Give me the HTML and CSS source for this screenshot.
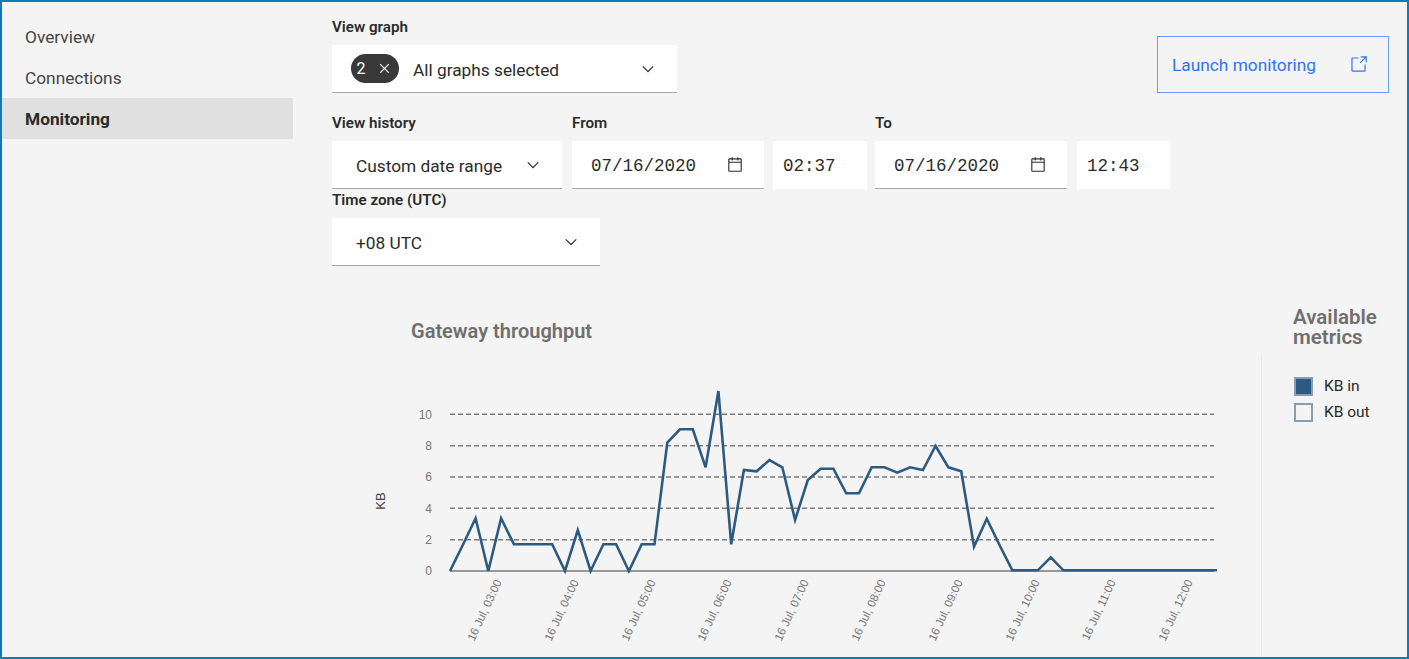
FILE: index.html
```html
<!DOCTYPE html>
<html>
  <head>
    <meta charset="utf-8">
    <title>Monitoring</title>
    <link rel="stylesheet" href="styles.css">
  </head>
  <body>
    <div class="cadre">
      <nav class="menu">
        <a class="menu-item">Overview</a>
        <a class="menu-item">Connections</a>
        <a class="menu-item actif">Monitoring</a>
      </nav>

      <main class="contenu">
        <div class="ligne-graph">
          <div class="champ">
            <div class="label">View graph</div>
            <div class="select select-graph">
              <span class="tag">2
                <svg class="icone-tag" viewBox="0 0 16 16"><path d="M12 4.7L11.3 4 8 7.3 4.7 4 4 4.7 7.3 8 4 11.3l.7.7L8 8.7l3.3 3.3.7-.7L8.7 8z"/></svg>
              </span>
              <span class="select-texte">All graphs selected</span>
              <svg class="icone" viewBox="0 0 16 16"><path d="M8 11L3 6l.7-.7L8 9.6l4.3-4.3.7.7z"/></svg>
            </div>
          </div>
          <a class="lancer">
            Launch monitoring
            <svg class="icone-lancer" viewBox="0 0 16 16"><path d="M13 14H3c-.6 0-1-.4-1-1V3c0-.6.4-1 1-1h5v1H3v10h10V8h1v5c0 .6-.4 1-1 1z"/><path d="M10 1v1h3.3L9 6.3l.7.7L14 2.7V6h1V1z"/></svg>
          </a>
        </div>

        <div class="ligne-dates">
          <div class="champ historique">
            <div class="label">View history</div>
            <div class="select">
              <span class="select-texte">Custom date range</span>
              <svg class="icone" viewBox="0 0 16 16"><path d="M8 11L3 6l.7-.7L8 9.6l4.3-4.3.7.7z"/></svg>
            </div>
          </div>
          <div class="champ date">
            <div class="label">From</div>
            <div class="select saisie">
              <span class="mono">07/16/2020</span>
              <svg class="icone" viewBox="0 0 16 16"><path d="M13 2h-2V1h-1v1H6V1H5v1H3a1 1 0 0 0-1 1v10a1 1 0 0 0 1 1h10a1 1 0 0 0 1-1V3a1 1 0 0 0-1-1zm0 11H3V6h10zm0-8H3V3h2v1h1V3h4v1h1V3h2z"/></svg>
            </div>
          </div>
          <div class="champ heure">
            <div class="label">&nbsp;</div>
            <div class="select heure-boite"><span class="mono">02:37</span></div>
          </div>
          <div class="champ date">
            <div class="label">To</div>
            <div class="select saisie">
              <span class="mono">07/16/2020</span>
              <svg class="icone" viewBox="0 0 16 16"><path d="M13 2h-2V1h-1v1H6V1H5v1H3a1 1 0 0 0-1 1v10a1 1 0 0 0 1 1h10a1 1 0 0 0 1-1V3a1 1 0 0 0-1-1zm0 11H3V6h10zm0-8H3V3h2v1h1V3h4v1h1V3h2z"/></svg>
            </div>
          </div>
          <div class="champ heure">
            <div class="label">&nbsp;</div>
            <div class="select heure-boite"><span class="mono">12:43</span></div>
          </div>
        </div>

        <div class="champ zone">
          <div class="label">Time zone (UTC)</div>
          <div class="select">
            <span class="select-texte">+08 UTC</span>
            <svg class="icone" viewBox="0 0 16 16"><path d="M8 11L3 6l.7-.7L8 9.6l4.3-4.3.7.7z"/></svg>
          </div>
        </div>

        <section class="graphique">
          <div class="trace">
            <h2 class="titre">Gateway throughput</h2>
            <!-- viewBox in page coordinates -->
            <svg class="courbe" viewBox="332 340 929 317">
              <g class="grille">
                <line x1="450" x2="1214" y1="414.3" y2="414.3"/>
                <line x1="450" x2="1214" y1="445.7" y2="445.7"/>
                <line x1="450" x2="1214" y1="477" y2="477"/>
                <line x1="450" x2="1214" y1="508.3" y2="508.3"/>
                <line x1="450" x2="1214" y1="539.7" y2="539.7"/>
              </g>
              <line class="axe" x1="450" x2="1214" y1="571" y2="571"/>
              <g class="axe-y">
                <text x="432" y="418.5">10</text>
                <text x="432" y="450">8</text>
                <text x="432" y="481">6</text>
                <text x="432" y="512.5">4</text>
                <text x="432" y="544">2</text>
                <text x="432" y="575">0</text>
              </g>
              <text class="unite" transform="translate(385 501) rotate(-90)">KB</text>
              <g class="axe-x">
                <text transform="translate(502 582) rotate(-65)">16 Jul, 03:00</text>
                <text transform="translate(579 582) rotate(-65)">16 Jul, 04:00</text>
                <text transform="translate(656 582) rotate(-65)">16 Jul, 05:00</text>
                <text transform="translate(732 582) rotate(-65)">16 Jul, 06:00</text>
                <text transform="translate(809 582) rotate(-65)">16 Jul, 07:00</text>
                <text transform="translate(886 582) rotate(-65)">16 Jul, 08:00</text>
                <text transform="translate(963 582) rotate(-65)">16 Jul, 09:00</text>
                <text transform="translate(1040 582) rotate(-65)">16 Jul, 10:00</text>
                <text transform="translate(1116 582) rotate(-65)">16 Jul, 11:00</text>
                <text transform="translate(1193 582) rotate(-65)">16 Jul, 12:00</text>
              </g>
              <polyline class="serie" points="450,571 462.8,545 475.6,518.3 488.3,571 501.1,518.3 513.9,544.3 526.7,544.3 539.5,544.3 552.2,544.3 565,571 577.8,530 590.6,571 603.4,544.3 616.1,544.3 628.9,571 641.7,544.3 654.5,544.3 667.3,442.7 680,429.3 692.8,429.3 705.6,467.3 718.4,391 731.2,544.3 743.9,470 756.7,471.3 769.5,460 782.3,467.3 795.1,520 807.8,480 820.6,468.7 833.4,468.7 846.2,493.3 859,493.3 871.7,467.3 884.5,467.3 897.3,472.7 910.1,467.3 922.9,470 935.6,446 948.4,467.3 961.2,471.3 974,546.7 986.8,518.7 999.5,545 1012.3,570.3 1025.1,570.3 1037.9,570.3 1050.7,557.3 1063.4,570.3 1217,570.3"/>
            </svg>
          </div>
          <aside class="legende">
            <h3 class="legende-titre">Available metrics</h3>
            <div class="legende-corps">
              <div class="legende-item"><span class="case pleine"></span>KB in</div>
              <div class="legende-item"><span class="case"></span>KB out</div>
            </div>
          </aside>
        </section>
      </main>
    </div>
  </body>
</html>
```

FILE: styles.css
```css
html, body, h2, h3{
  margin:0px;
  padding:0px;
}
body{
  font-family:"Roboto", "Liberation Sans", sans-serif;
  color:#2b2b2b;
}
.cadre{
  width:100%;
  height:659px;
  display:flex;
  box-sizing:border-box;
  border:2px solid #0a7cba;
  background-color:#f4f4f4;
  overflow:hidden;
}

/* menu */
.menu{
  width:291px;
  flex-shrink:0;
  padding-top:14px;
}
.menu-item{
  display:block;
  height:41px;
  line-height:43px;
  padding-left:23px;
  font-size:17.3px;
  color:#444;
}
.actif{
  background-color:#e0e0e0;
  font-weight:700;
  color:#2b2b2b;
}

/* formulaire */
.contenu{
  flex:1;
  min-width:0;
  padding:16px 18px 0px 39px;
}
.label{
  height:18px;
  line-height:21px;
  margin-bottom:10px;
  font-size:15.2px;
  font-weight:600;
  color:#2b2b2b;
}
.select{
  height:48px;
  display:flex;
  align-items:center;
  justify-content:space-between;
  box-sizing:border-box;
  padding:0px 20px 0px 24px;
  background-color:#fff;
  border-bottom:1px solid #a8a8a8;
  font-size:17.3px;
}
.select-texte, .mono{
  padding-top:2px;
}
.icone{
  width:18px;
  height:18px;
  flex-shrink:0;
  fill:#2b2b2b;
}
.ligne-graph{
  display:flex;
  justify-content:space-between;
  align-items:flex-end;
}
.ligne-graph .champ{
  width:345px;
}
.ligne-graph .label{
  line-height:19px;
  margin-bottom:9px;
}
.select-graph{
  padding:0px 20px 0px 19px;
}
.tag{
  width:48px;
  height:29px;
  display:flex;
  align-items:center;
  justify-content:center;
  gap:9px;
  border-radius:15px;
  background-color:#393939;
  color:#fff;
  font-size:16px;
}
.icone-tag{
  width:19px;
  height:19px;
  fill:#fff;
}
.select-graph .select-texte{
  flex:1;
  margin-left:14px;
}
.lancer{
  width:232px;
  height:57px;
  display:flex;
  align-items:center;
  justify-content:space-between;
  box-sizing:border-box;
  padding:0px 20px 0px 14px;
  border:1px solid #6a9bfa;
  color:#2f74f0;
  font-size:17.3px;
}
.icone-lancer{
  width:19px;
  height:19px;
  fill:#2f74f0;
}
.ligne-dates{
  display:flex;
  margin-top:20px;
}
.historique{
  width:230px;
  margin-right:10px;
}
.date{
  width:192px;
  margin-right:9px;
}
.heure{
  width:94px;
  margin-right:8px;
}
.heure:last-child{
  width:93px;
}
.date:nth-child(4){
  margin-right:10px;
}
.saisie{
  padding:0px 20px 0px 19px;
}
.heure-boite{
  padding:0px 0px 0px 10px;
  border-bottom:none;
}
.mono{
  font-family:"Liberation Mono", monospace;
  font-size:17.5px;
  color:#2b2b2b;
}
.zone{
  width:268px;
  margin-top:1px;
}

/* graphique */
.graphique{
  display:flex;
  margin-top:42px;
}
.trace{
  width:929px;
  flex-shrink:0;
}
.titre{
  height:18px;
  line-height:18px;
  margin:14px 0px 0px 79px;
  font-size:20px;
  font-weight:600;
  color:#6f6f6f;
}
.courbe{
  width:929px;
  height:317px;
  display:block;
  font-family:"Liberation Sans", sans-serif;
}
.grille line{
  stroke:#7a7a7a;
  stroke-width:1.5;
  stroke-dasharray:5 3;
}
.axe{
  stroke:#7a7a7a;
  stroke-width:1.5;
}
.axe-y text{
  font-size:12px;
  fill:#777;
  text-anchor:end;
}
.axe-x text{
  font-size:11.5px;
  fill:#777;
  text-anchor:end;
}
.unite{
  font-size:13px;
  fill:#444;
  text-anchor:middle;
}
.serie{
  fill:none;
  stroke:#2d5a80;
  stroke-width:2.6;
}
.legende{
  flex:1;
}
.legende-titre{
  width:100px;
  margin:-1px 0px 0px 32px;
  line-height:20px;
  font-size:20.5px;
  font-weight:600;
  color:#6f6f6f;
}
.legende-corps{
  height:300px;
  margin-top:8px;
  padding:18px 0px 0px 32px;
  border-left:1px solid #e8e8e8;
}
.legende-item{
  height:26px;
  display:flex;
  align-items:center;
  gap:11px;
  font-size:15.5px;
  color:#2b2b2b;
}
.case{
  width:19px;
  height:19px;
  box-sizing:border-box;
  border:2.5px solid #8a9daf;
  background-color:#f4f4f4;
}
.pleine{
  background-color:#2d5a80;
}
```
